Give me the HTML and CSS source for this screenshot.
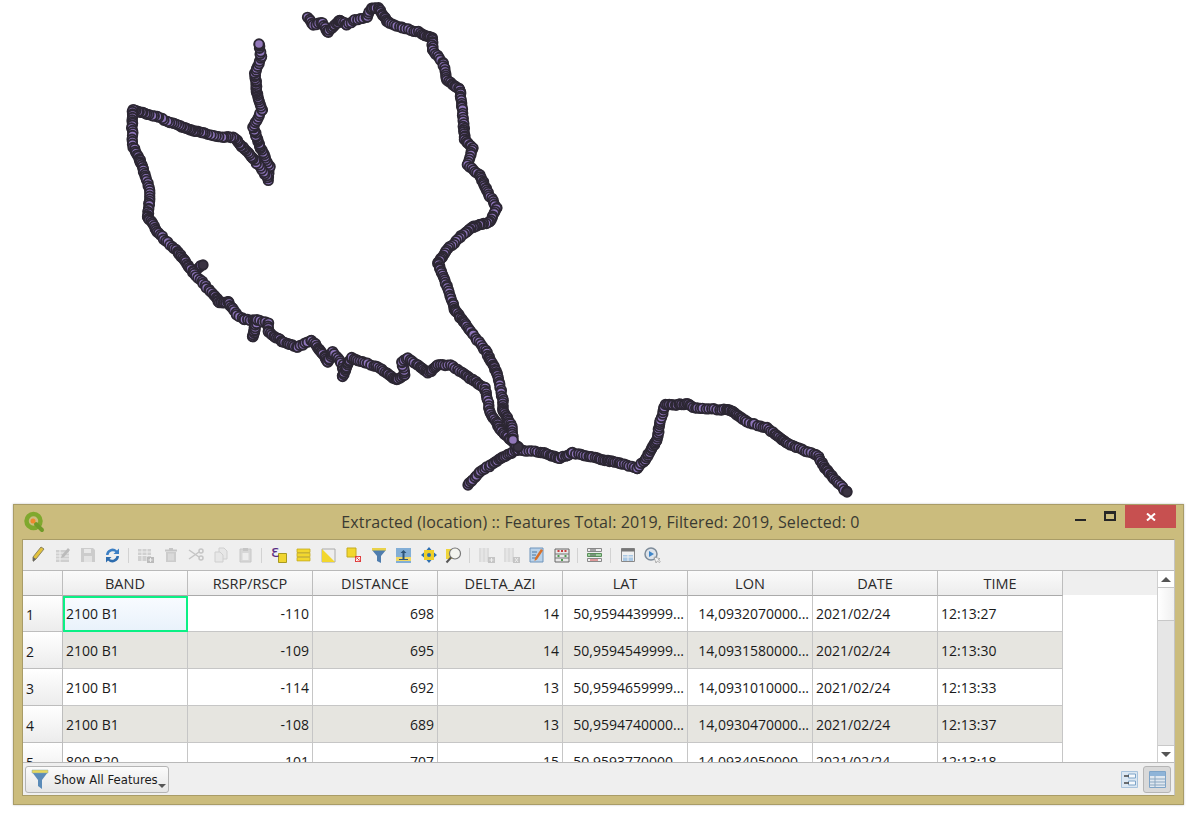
FILE: index.html
```html
<!DOCTYPE html>
<html lang="en">
<head>
<meta charset="utf-8">
<title>Extracted (location)</title>
<link rel="stylesheet" href="styles.css">
</head>
<body>
<svg class="map" id="map" width="1201" height="504" viewBox="0 0 1201 504"></svg>

<section class="window">
  <header class="titlebar">
    <svg class="logo" width="22" height="22" viewBox="0 0 22 22">
      <circle cx="10.5" cy="10" r="7" fill="none" stroke="#7fa82e" stroke-width="4.500"/>
      <path d="M13 13l6 6" stroke="#6f9a28" stroke-width="4" stroke-linecap="round"/>
      <circle cx="10" cy="10" r="2.500" fill="#ee8a2c"/>
    </svg>
    <h1 class="title">Extracted (location) :: Features Total: 2019, Filtered: 2019, Selected: 0</h1>
    <div class="winbtns">
      <span class="win-min"></span>
      <span class="win-max"></span>
      <span class="win-close">
        <svg width="10" height="8" viewBox="0 0 10 8"><path d="M1 0.500l8 7M9 0.500l-8 7" stroke="#fff" stroke-width="2"/></svg>
      </span>
    </div>
  </header>

  <div class="client">
    <div class="toolbar">
      <span class="tb"><svg width="16" height="18" viewBox="0 0 16 18"><path d="M11 1l3 2-8 10-3 2 0-4z" fill="#e3c23c" stroke="#8b8460"/><path d="M3 11l0 5 3-3z" fill="#666"/></svg></span>
      <span class="tb dim"><svg width="16" height="16" viewBox="0 0 16 16"><path d="M1 3h13v12H1z" fill="#bbb"/><path d="M1 6h13M1 9h13M1 12h13M5 3v12" stroke="#eee"/><path d="M13 1l2 2-6 7-3 1 1-3z" fill="#999"/></svg></span>
      <span class="tb dim"><svg width="16" height="16" viewBox="0 0 16 16"><path d="M1 1h12l2 2v12H1z" fill="#b5b5b5"/><path d="M4 2h7v4H4z" fill="#e4e4e4"/><path d="M4 9h8v6H4z" fill="#dcdcdc"/></svg></span>
      <span class="tb"><svg width="17" height="17" viewBox="0 0 17 17"><path d="M2 8a6.500 6.500 0 0 1 11-4.500L15 1.500V7H9.500l2-2A4.500 4.500 0 0 0 4.500 8z" fill="#3c7fc4"/><path d="M15 9a6.500 6.500 0 0 1-11 4.500L2 15.500V10h5.500l-2 2a4.500 4.500 0 0 0 7-3z" fill="#2d6cae"/></svg></span>
      <span class="sep"></span>
      <span class="tb dim"><svg width="17" height="16" viewBox="0 0 17 16"><path d="M1 2h13v12H1z" fill="#bcbcbc"/><path d="M1 5h13M1 8.500h13M5 2v12M10 2v12" stroke="#eee"/><path d="M10 10h7v6h-7z" fill="#999"/><path d="M13.500 11v4M11.500 13h4" stroke="#eee"/></svg></span>
      <span class="tb dim"><svg width="14" height="16" viewBox="0 0 14 16"><path d="M1 2.500h12v2H1z" fill="#aaa"/><path d="M5 1h4v2H5z" fill="#aaa"/><path d="M2 5h10v10H2z" fill="#b5b5b5"/><path d="M5 6.500v7M7 6.500v7M9 6.500v7" stroke="#e4e4e4"/></svg></span>
      <span class="tb dim"><svg width="16" height="14" viewBox="0 0 16 14"><path d="M1 2l10 7M1 11l10-7" stroke="#aaa" stroke-width="1.500"/><circle cx="13" cy="3" r="2" fill="none" stroke="#aaa" stroke-width="1.500"/><circle cx="13" cy="10" r="2" fill="none" stroke="#aaa" stroke-width="1.500"/></svg></span>
      <span class="tb dim"><svg width="14" height="16" viewBox="0 0 14 16"><path d="M5 1h5l3 3v8H5z" fill="#e2e2e2" stroke="#bbb"/><path d="M1 5h5l3 3v7H1z" fill="#e2e2e2" stroke="#bbb"/></svg></span>
      <span class="tb dim"><svg width="13" height="16" viewBox="0 0 13 16"><path d="M1 2h11v13H1z" fill="#c8c8c8" stroke="#b0b0b0"/><path d="M4 1h5v3H4z" fill="#aaa"/><path d="M3.500 6h6v7h-6z" fill="#ececec"/></svg></span>
      <span class="sep"></span>
      <span class="tb"><svg width="16" height="18" viewBox="0 0 16 18"><path d="M7.500 7.500h8v9h-8z" fill="#f0d530" stroke="#a89a20"/><text class="eps" x="0" y="11">&#949;</text></svg></span>
      <span class="tb"><svg width="15" height="14" viewBox="0 0 15 14"><path d="M1 1h13v3.500H1zM1 5.200h13v3.500H1zM1 9.400h13v3.500H1z" fill="#f2d72e" stroke="#c4ab20" stroke-width=".8"/></svg></span>
      <span class="tb"><svg width="15" height="15" viewBox="0 0 15 15"><path d="M1 1h13v13H1z" fill="#eee" stroke="#aaa"/><path d="M1 1l13 13H1z" fill="#f2d72e"/></svg></span>
      <span class="tb"><svg width="16" height="16" viewBox="0 0 16 16"><path d="M1 1h9v9H1z" fill="#f2d72e" stroke="#c4ab20"/><path d="M9 9h6v6H9z" fill="#e03b3b"/><path d="M10 14l4-4" stroke="#fff"/><circle cx="12" cy="12" r="1.800" fill="none" stroke="#fff" stroke-width=".8"/></svg></span>
      <span class="tb"><svg width="16" height="17" viewBox="0 0 16 17"><path d="M1 3h14l-5 6v7l-4-2V9z" fill="#4f7dae"/><path d="M1 1h14v2.500H1z" fill="#e9d24a"/></svg></span>
      <span class="tb"><svg width="15" height="15" viewBox="0 0 15 15"><path d="M0 0h15v15H0z" fill="#82aed6"/><path d="M0 9h15v4H0z" fill="#eed765"/><path d="M7.500 2l3 3H8.500v6h-2V5H4.500zM3 11h9v1H3z" fill="#2d5578"/></svg></span>
      <span class="tb"><svg width="16" height="16" viewBox="0 0 16 16"><path d="M3 3h10v10H3z" fill="#efcf28"/><path d="M8 0l2.500 3h-5zM8 16l2.500-3h-5zM0 8l3-2.500v5zM16 8l-3-2.500v5z" fill="#2f6fb0"/><circle cx="8" cy="8" r="2" fill="#2f6fb0"/></svg></span>
      <span class="tb"><svg width="17" height="17" viewBox="0 0 17 17"><path d="M1 2h8v10H1z" fill="#efd53a"/><circle cx="10" cy="6.500" r="5.500" fill="#f4f4ee" stroke="#777" stroke-width="1.200"/><path d="M6 10.500L1.500 15.500" stroke="#555" stroke-width="2"/></svg></span>
      <span class="sep"></span>
      <span class="tb dim"><svg width="17" height="16" viewBox="0 0 17 16"><path d="M1 1h10v14H1z" fill="#d0d0d0"/><path d="M4 1v14M8 1v14" stroke="#eee"/><path d="M10 10h7v6h-7z" fill="#aaa"/><path d="M13.500 11v4M11.500 13h4" stroke="#eee"/></svg></span>
      <span class="tb dim"><svg width="17" height="16" viewBox="0 0 17 16"><path d="M1 1h10v14H1z" fill="#d0d0d0"/><path d="M4 1v14M8 1v14" stroke="#eee"/><path d="M10 10h7v6h-7z" fill="#aaa"/><path d="M12 11l3 4M15 11l-3 4" stroke="#eee"/></svg></span>
      <span class="tb"><svg width="15" height="16" viewBox="0 0 15 16"><path d="M1 1h13v14H1z" fill="#b9d2ea" stroke="#6e94bb"/><path d="M3 5h5M3 8h4M3 11h4" stroke="#4a76a3"/><path d="M12 2l2 1.500-6 9-2.500 1.500.5-3z" fill="#d8702a"/></svg></span>
      <span class="tb"><svg width="16" height="15" viewBox="0 0 16 15"><path d="M1 1h14v13H1z" fill="#e8e8e8" stroke="#666"/><path d="M1 6h14M1 10h14" stroke="#777"/><path d="M3.500 3h2M7 3h2M10.500 3h2" stroke="#c83f3f" stroke-width="2"/><path d="M3.500 8h2M10.500 8h2M7 12h2" stroke="#4f9a4f" stroke-width="2"/></svg></span>
      <span class="sep"></span>
      <span class="tb"><svg width="15" height="14" viewBox="0 0 15 14"><path d="M.5.500h14v3H.5z" fill="#efefef" stroke="#888"/><path d="M.5 5.500h14v3H.5z" fill="#9fd09f" stroke="#5b8f5b"/><path d="M.5 10.500h14v3H.5z" fill="#efefef" stroke="#888"/><path d="M3 2h6M3 7h6" stroke="#555"/><path d="M3 12h8" stroke="#c94040"/></svg></span>
      <span class="sep"></span>
      <span class="tb"><svg width="14" height="14" viewBox="0 0 14 14"><path d="M.5.500h13v13H.5z" fill="#f0f0f0" stroke="#888"/><path d="M.5.500h13v3H.5z" fill="#777"/><path d="M2 7h10v6H2z" fill="#a9c8e4"/><path d="M2 9h10M7 7v6" stroke="#f0f0f0"/></svg></span>
      <span class="tb"><svg width="17" height="17" viewBox="0 0 17 17"><circle cx="7" cy="7" r="6" fill="#dde3ea" stroke="#7d8b99" stroke-width="1.500"/><path d="M5 4l5 3-5 3z" fill="#3f86c9"/><path d="M10 10l2 6 1.300-2 2.200 1.500.8-1-2-1.800 1.700-1z" fill="#f4f4f4" stroke="#888" stroke-width=".6"/></svg></span>
    </div>

    <div class="grid">
      <div class="grid-main">
        <div class="row headrow">
          <span class="corner"></span>
          <span class="hcell">BAND</span><span class="hcell">RSRP/RSCP</span><span class="hcell">DISTANCE</span><span class="hcell">DELTA_AZI</span><span class="hcell">LAT</span><span class="hcell">LON</span><span class="hcell">DATE</span><span class="hcell">TIME</span>
          <span class="headfill"></span>
        </div>
        <div class="rows">
          <div class="row first">
            <span class="num">1</span><span class="cell current">2100 B1</span><span class="cell right">-110</span><span class="cell right">698</span><span class="cell right">14</span><span class="cell right">50,9594439999...</span><span class="cell right">14,0932070000...</span><span class="cell">2021/02/24</span><span class="cell">12:13:27</span>
          </div>
          <div class="row alt">
            <span class="num">2</span><span class="cell">2100 B1</span><span class="cell right">-109</span><span class="cell right">695</span><span class="cell right">14</span><span class="cell right">50,9594549999...</span><span class="cell right">14,0931580000...</span><span class="cell">2021/02/24</span><span class="cell">12:13:30</span>
          </div>
          <div class="row">
            <span class="num">3</span><span class="cell">2100 B1</span><span class="cell right">-114</span><span class="cell right">692</span><span class="cell right">13</span><span class="cell right">50,9594659999...</span><span class="cell right">14,0931010000...</span><span class="cell">2021/02/24</span><span class="cell">12:13:33</span>
          </div>
          <div class="row alt">
            <span class="num">4</span><span class="cell">2100 B1</span><span class="cell right">-108</span><span class="cell right">689</span><span class="cell right">13</span><span class="cell right">50,9594740000...</span><span class="cell right">14,0930470000...</span><span class="cell">2021/02/24</span><span class="cell">12:13:37</span>
          </div>
          <div class="row">
            <span class="num">5</span><span class="cell">800 B20</span><span class="cell right">-101</span><span class="cell right">707</span><span class="cell right">15</span><span class="cell right">50,9593770000...</span><span class="cell right">14,0934050000...</span><span class="cell">2021/02/24</span><span class="cell">12:13:18</span>
          </div>
        </div>
      </div>
      <div class="scrollbar">
        <span class="sb-btn"><span class="arrow-up"></span></span>
        <span class="sb-thumb"></span>
        <span class="sb-track"></span>
        <span class="sb-btn sb-down"><span class="arrow-down"></span></span>
      </div>
    </div>

    <footer class="bottombar">
      <button class="filterbtn" type="button">
        <svg width="18" height="22" viewBox="0 0 18 22"><path d="M1 3h16l-6 8v9l-4-3v-6z" fill="#5b8bb8"/><path d="M1 1h16v3H1z" fill="#e8d75c" stroke="#8aa" stroke-width=".5"/></svg>
        <span>Show All Features</span>
        <span class="caret"></span>
      </button>
      <div class="viewbtns">
        <span class="viewbtn">
          <svg width="17" height="17" viewBox="0 0 17 17"><path d="M.5.500h16v16H.5z" fill="#dbe7f2" stroke="#a9c3dc"/><path d="M7.500 3h7v4h-7zM7.500 10h7v4h-7z" fill="#f6f9fc" stroke="#7ea4c8"/><path d="M3 5h5M3 12h5" stroke="#444" stroke-width="1.500"/></svg>
        </span>
        <span class="viewbtn active">
          <svg width="17" height="17" viewBox="0 0 17 17"><path d="M.5.500h16v16H.5z" fill="#e0e8f0" stroke="#7ea4c8"/><path d="M1 1h15v4H1z" fill="#8fb4d8"/><path d="M1 8h15M1 11h15M1 14h15M6 5v12" stroke="#8aa6c0"/></svg>
        </span>
      </div>
    </footer>
  </div>
</section>
<script src="map.js"></script>
</body>
</html>
```
FILE: styles.css
```css
* { box-sizing: border-box; }
html, body { margin: 0; padding: 0; }
body {
  width: 1201px;
  height: 819px;
  background: #fff;
  overflow: hidden;
  font-family: "Open Sans", "Noto Sans", sans-serif;
  color: #1a1a1a;
}
.map { display: block; }

.window {
  width: 1171px;
  height: 301px;
  margin: 0 0 0 13px;
  background: #cbbc7d;
  border: 1px solid #a99c67;
  display: flex;
  flex-direction: column;
  padding: 0 8px 8px;
  box-shadow: 0 0 2px rgba(0,0,0,.25);
}
.titlebar {
  height: 34px;
  flex: none;
  display: flex;
  align-items: center;
  position: relative;
}
.logo { flex: none; margin: 0 0 0 1px; }
.title {
  flex: 1;
  margin: 0;
  padding-right: 19px;
  text-align: center;
  font-size: 16px;
  letter-spacing: .12px;
  font-weight: 400;
  color: #3a3a32;
  white-space: nowrap;
}
.winbtns {
  position: absolute;
  top: 0;
  right: -1px;
  display: flex;
  align-items: flex-start;
}
.win-min { width: 11px; height: 2px; background: #262626; margin: 14px 18px 0 0; }
.win-max { width: 12px; height: 10px; border: 2px solid #262626; border-top-width: 3px; margin: 6px 9px 0 0; }
.win-close {
  width: 51px;
  height: 23px;
  background: #c75050;
  display: flex;
  align-items: center;
  justify-content: center;
}

.client {
  flex: 1;
  min-height: 0;
  background: #efefef;
  border: 1px solid #a99c67;
  border-right-color: #c4c4c4;
  display: flex;
  flex-direction: column;
}
.toolbar {
  height: 30px;
  flex: none;
  display: flex;
  align-items: center;
  padding-left: 2px;
}
.tb {
  width: 25px;
  height: 24px;
  flex: none;
  display: flex;
  align-items: center;
  justify-content: center;
}
.tb.dim { opacity: .6; }
.sep {
  width: 1px;
  height: 15px;
  margin: 0 4px 0 3px;
  background: #d2d2d2;
  flex: none;
}
.eps { font: 16px "DejaVu Sans", sans-serif; fill: #5a2d82; }

.grid {
  flex: 1;
  min-height: 0;
  display: flex;
  border-top: 1px solid #b9b9b9;
  border-bottom: 1px solid #b9b9b9;
}
.grid-main { flex: 1; min-width: 0; display: flex; flex-direction: column; background: #fff; }
.rows { flex: 1; min-height: 0; overflow: hidden; }
.row { display: flex; height: 37px; font-size: 14px; }
.row.first { height: 36px; }
.alt .cell { background: #e6e5e0; }
.headrow { height: 25px; flex: none; font-size: 14.500px; }
.corner, .num {
  width: 40px;
  flex: none;
  border-right: 1px solid #bdbdbd;
  border-bottom: 1px solid #bdbdbd;
  background: linear-gradient(#fff, #ececec);
}
.corner { background: linear-gradient(#f9f9f9, #ececec); border-bottom-color: #aaa; }
.num { padding: 10px 0 0 3px; line-height: 20px; }
.first .num { padding-top: 9px; }
.hcell {
  width: 125px;
  flex: none;
  text-align: center;
  line-height: 25px;
  border-right: 1px solid #bdbdbd;
  border-bottom: 1px solid #aaa;
  background: linear-gradient(#fbfbfb, #ececec);
  color: #2a2a2a;
}
.headfill { flex: 1; height: 24px; background: #efefef; }
.cell {
  width: 125px;
  flex: none;
  line-height: 38px;
  padding: 0 3px;
  border-right: 1px solid #c6c6c6;
  border-bottom: 1px solid #c6c6c6;
  white-space: nowrap;
  overflow: hidden;
}
.first .cell { line-height: 36px; }
.right { text-align: right; }
.first .current {
  border: 2px solid #0bf085;
  line-height: 31px;
  padding-left: 1px;
  background: linear-gradient(#f8fbff, #e9f2fb);
}

.scrollbar {
  width: 17px;
  flex: none;
  display: flex;
  flex-direction: column;
  background: #e6e6e6;
  border-left: 1px solid #cfcfcf;
}
.sb-btn {
  height: 17px;
  flex: none;
  background: #fff;
  border-bottom: 1px solid #c8c8c8;
  display: flex;
  align-items: center;
  justify-content: center;
}
.sb-down { border-bottom: 0; border-top: 1px solid #c8c8c8; }
.sb-thumb { height: 33px; flex: none; background: linear-gradient(90deg, #fff, #f0f0f0); border-bottom: 1px solid #c8c8c8; }
.sb-track { flex: 1; }
.arrow-up, .arrow-down { width: 0; height: 0; border: 5px solid transparent; }
.arrow-up { border-bottom: 5px solid #555; border-top: 0; }
.arrow-down { border-top: 5px solid #555; border-bottom: 0; }

.bottombar {
  height: 32px;
  flex: none;
  display: flex;
  align-items: flex-start;
  justify-content: space-between;
  padding: 3px 3px 0 2px;
}
.filterbtn {
  height: 27px;
  width: 144px;
  padding: 0 0 0 5px;
  display: flex;
  align-items: center;
  gap: 5px;
  position: relative;
  background: linear-gradient(#fbfbfb, #e6e6e6);
  border: 1px solid #b5b5b5;
  border-radius: 3px;
  font: 11.700px "DejaVu Sans", sans-serif;
  color: #1a1a1a;
  white-space: nowrap;
}
.caret {
  position: absolute;
  right: 2px;
  bottom: 4px;
  border: 4px solid transparent;
  border-top: 4px solid #555;
  border-bottom: 0;
}
.viewbtns { display: flex; align-items: center; }
.viewbtn {
  width: 28px;
  height: 27px;
  display: flex;
  align-items: center;
  justify-content: center;
  border: 1px solid transparent;
  border-radius: 3px;
}
.viewbtn.active { background: #d9d9d9; border-color: #b5b5b5; }
```
FILE: map.js
```js
(function () {
  var NS = "http://www.w3.org/2000/svg";
  var svg = document.getElementById("map");
  var tracks = [
    { disc: false, pts: [[468,485],[480,472],[503,457],[518,450],[540,452],[560,458],[573,453],[590,457],[620,463],[637,468],[645,460],[657,440],[660,423],[665,405],[688,404],[695,408],[730,410],[747,422],[767,428],[787,443],[803,450],[817,455],[828,472],[847,492]] },
    { disc: false, pts: [[193,272],[203,265]] },
    { disc: true, pts: [[268,180],[270,167],[260,147],[253,127],[262,110],[257,93],[255,73],[261,57],[259,44]] },
    { disc: false, pts: [[268,178],[253,158],[233,137],[222,137],[190,130],[157,117],[133,110],[132,125],[133,147],[140,160],[150,190],[148,217],[158,233],[178,252],[193,272],[203,283],[218,300],[219,303],[228,302],[237,315],[245,320],[255,320],[253,337],[257,320],[268,323],[268,332],[283,342],[298,347],[312,340],[320,350],[328,362],[333,352],[343,365],[343,377],[348,363],[352,358],[377,367],[397,380],[405,375],[402,362],[408,358],[428,373],[438,365],[450,365],[470,378],[485,388],[490,413],[503,433],[518,447]] },
    { disc: true, pts: [[308,17],[313,25],[322,23],[328,32],[340,20],[347,25],[355,20],[367,17],[372,8],[378,8],[388,22],[403,28],[418,32],[432,38],[433,50],[443,63],[447,80],[460,90],[462,107],[465,140],[473,148],[467,165],[480,175],[488,193],[497,208],[490,222],[473,227],[460,237],[447,250],[438,263],[447,287],[455,310],[472,333],[487,353],[497,373],[503,400],[503,410],[512,427],[513,440]] }
  ];
  var seed = 7;
  function jitter() {
    seed = (seed * 9301 + 49297) % 233280;
    return seed / 233280 - 0.5;
  }
  function circle(x, y, fill) {
    var c = document.createElementNS(NS, "circle");
    c.setAttribute("cx", x.toFixed(1));
    c.setAttribute("cy", y.toFixed(1));
    c.setAttribute("r", "4.700");
    c.setAttribute("fill", fill);
    c.setAttribute("stroke", "#2c2733");
    c.setAttribute("stroke-width", "1.900");
    svg.appendChild(c);
  }
  tracks.forEach(function (track) {
    var pts = track.pts, walked = 0;
    for (var i = 0; i < pts.length - 1; i++) {
      var a = pts[i], b = pts[i + 1];
      var len = Math.hypot(b[0] - a[0], b[1] - a[1]);
      var d = 0;
      while (d < len) {
        var t = d / len;
        circle(a[0] + (b[0] - a[0]) * t + jitter() * 1.200, a[1] + (b[1] - a[1]) * t + jitter() * 1.200, "#8f76bb");
        d += 2.300 + 0.600 * Math.sin((walked + d) / 9);
      }
      walked += len;
    }
    var last = pts[pts.length - 1];
    circle(last[0], last[1], track.disc ? "#9278ba" : "#3a3342");
  });
})();
```
